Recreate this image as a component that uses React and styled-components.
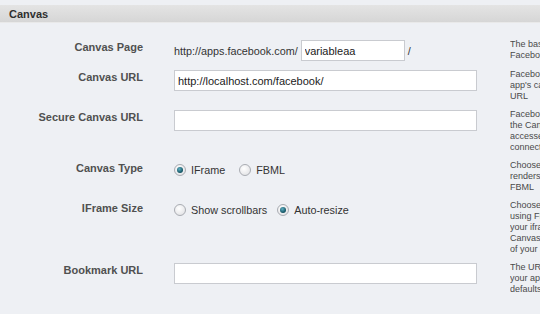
import React from "react";
import styled, { createGlobalStyle } from "styled-components";

const GlobalStyle = createGlobalStyle`
    html, body {
        margin: 0;
        padding: 0;
        background: #eef0f4;
        overflow: hidden;
    }
`;

// Page
const Page = styled.div`
    width: 540px;
    height: 314px;
    overflow: hidden;
    background: #eef0f4;
    font-family: "Liberation Sans", Arial, sans-serif;
    padding-top: 5px;
    box-sizing: border-box;
`;

// Section header
const SectionHeader = styled.div`
    height: 17px;
    background: linear-gradient(#e4e4e4, #d6d6d6);
    border-bottom: 1px solid #e9e9e9;
    padding-left: 9px;
    display: flex;
    align-items: center;
    font-size: 11px;
    font-weight: 700;
    color: #2f2f2f;
`;

// Form grid
const Form = styled.div`
    display: grid;
    grid-template-columns: 143px 305px 1fr;
    column-gap: 31px;
    row-gap: 7px;
    padding-top: 16px;
`;

const Label = styled.div`
    text-align: right;
    font-size: 11px;
    font-weight: 700;
    color: #505050;
    line-height: 13px;
    padding-top: 2px;
    white-space: nowrap;
`;

const Field = styled.div`
    display: flex;
    align-items: center;
    font-size: 10.8px;
    color: #333;
    height: ${(p) => (p.$radio ? "19px" : "23px")};
    gap: ${(p) => (p.$radio ? "0" : "3px")};
    align-self: start;
`;

const Input = styled.input`
    box-sizing: border-box;
    width: ${(p) => p.$w || "303px"};
    height: 21px;
    border: 1px solid #c9cbd0;
    background: #fff;
    font-family: "Liberation Sans", Arial, sans-serif;
    font-size: 11px;
    color: #222;
    padding: 0 3px;
    outline: none;
`;

const Help = styled.div`
    font-family: "Liberation Sans", Arial, sans-serif;
    font-size: 9px;
    line-height: 11px;
    color: #4a4a4a;
    white-space: nowrap;
    overflow: hidden;
`;

const HelpLine = styled.div``;

// Radio
const RadioGroup = styled.label`
    display: flex;
    align-items: center;
    margin-right: ${(p) => p.$gap || "14px"};
    cursor: pointer;
`;

const RadioDot = styled.span`
    width: 12px;
    height: 12px;
    border-radius: 50%;
    box-sizing: border-box;
    border: 1px solid #a9acb2;
    background: radial-gradient(circle at 40% 35%, #ffffff, #dcdde0);
    display: flex;
    align-items: center;
    justify-content: center;
    margin-right: 5px;

    &::after {
        content: "";
        display: ${(p) => (p.$checked ? "block" : "none")};
        width: 6px;
        height: 6px;
        border-radius: 50%;
        background: radial-gradient(circle at 40% 35%, #5fb0c4, #10505f 70%);
    }
`;

const RadioText = styled.span`
    font-size: 10.8px;
    color: #333;
`;

const Radio = ({ checked, children, gap }) => (
    <RadioGroup $gap={gap}>
        <RadioDot $checked={checked} />
        <RadioText>{children}</RadioText>
    </RadioGroup>
);

const HelpText = ({ lines }) => (
    <Help>
        {lines.map((l, i) => (
            <HelpLine key={i}>{l}</HelpLine>
        ))}
    </Help>
);

export default function App() {
    return (
        <Page>
            <GlobalStyle />
            <SectionHeader>Canvas</SectionHeader>
            <Form>
                <Label>Canvas Page</Label>
                <Field>
                    <span>http://apps.facebook.com/</span>
                    <Input $w="104px" defaultValue="variableaa" />
                    <span>/</span>
                </Field>
                <HelpText lines={["The base URL for your app", "Facebook"]} />

                <Label>Canvas URL</Label>
                <Field>
                    <Input defaultValue="http://localhost.com/facebook/" />
                </Field>
                <HelpText lines={["Facebook pulls the", "app's canvas", "URL"]} />

                <Label>Secure Canvas URL</Label>
                <Field>
                    <Input defaultValue="" />
                </Field>
                <HelpText lines={["Facebook pulls", "the Canvas", "accessed over", "connection"]} />

                <Label>Canvas Type</Label>
                <Field $radio>
                    <Radio checked gap="14px">IFrame</Radio>
                    <Radio>FBML</Radio>
                </Field>
                <HelpText lines={["Choose whether", "renders using", "FBML"]} />

                <Label>IFrame Size</Label>
                <Field $radio>
                    <Radio gap="10px">Show scrollbars</Radio>
                    <Radio checked>Auto-resize</Radio>
                </Field>
                <HelpText lines={["Choose scrollbars", "using FBML", "your iframe", "Canvas page", "of your app"]} />

                <Label>Bookmark URL</Label>
                <Field>
                    <Input defaultValue="" />
                </Field>
                <HelpText lines={["The URL", "your app", "defaults to"]} />
            </Form>
        </Page>
    );
}
